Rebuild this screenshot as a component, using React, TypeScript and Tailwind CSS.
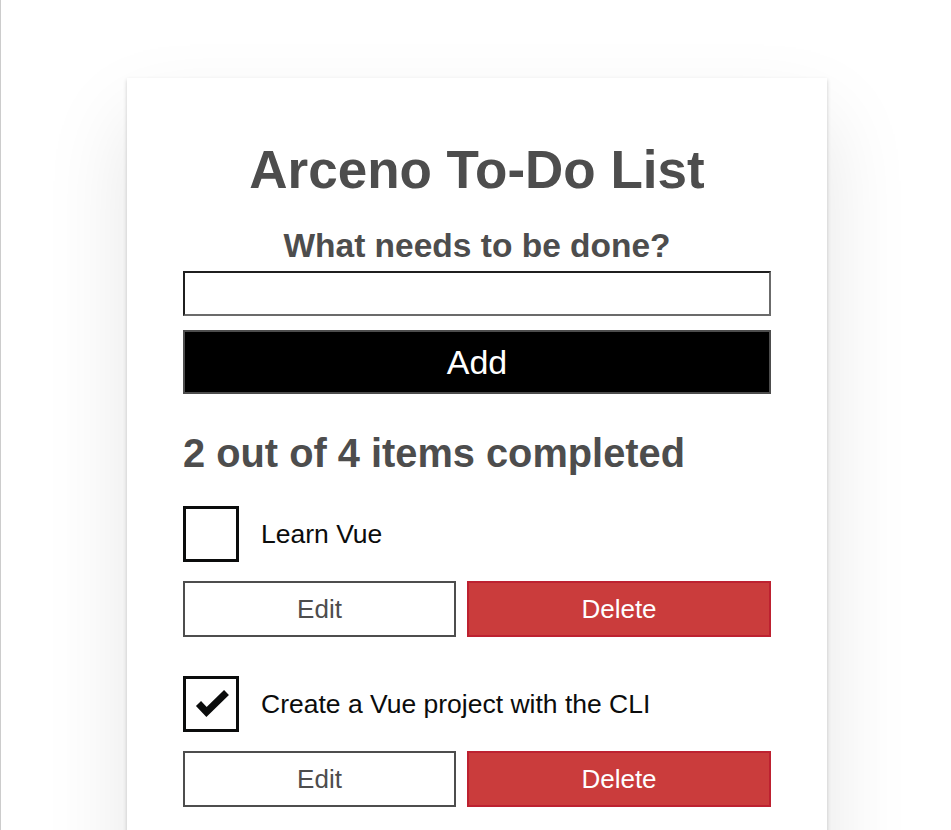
import { useState } from "react";

interface Todo {
  id: number;
  label: string;
  done: boolean;
}

const startTodos: Todo[] = [
  { id: 1, label: "Learn Vue", done: false },
  { id: 2, label: "Create a Vue project with the CLI", done: true },
  { id: 3, label: "Have fun", done: true },
  { id: 4, label: "Create a to-do list", done: false },
];

function TodoItem({ todo, onToggle }: { todo: Todo; onToggle: () => void }) {
  return (
    <li className="mt-[39px] first:mt-0">
      <div className="flex items-center">
        <button
          onClick={onToggle}
          aria-label={todo.label}
          className="relative h-[56px] w-[56px] shrink-0 border-[3px] border-[#0b0c0c] bg-white"
        >
          {todo.done && (
            <svg
              className="absolute left-[-3px] top-[-3px]"
              width="56"
              height="56"
              viewBox="0 0 56 56"
              fill="none"
            >
              <path d="M15.5 27.5 L23.5 36 L43.5 16.5" stroke="#0b0c0c" strokeWidth="7" />
            </svg>
          )}
        </button>
        <span className="ml-[22px] text-[26.5px] leading-[32px] text-[#0b0c0c]">
          {todo.label}
        </span>
      </div>
      <div className="mt-[19px] flex gap-[11px]">
        <button className="h-[56px] w-[273px] border-2 border-[#4d4d4d] bg-white text-[26px] text-[#4d4d4d]">
          Edit
        </button>
        <button className="h-[56px] flex-1 border-2 border-[#bd2130] bg-[#ca3c3c] text-[26px] text-white">
          Delete
        </button>
      </div>
    </li>
  );
}

export default function App() {
  const [todos, setTodos] = useState(startTodos);
  const [texto, setTexto] = useState("");

  const feitos = todos.filter((t) => t.done).length;

  const adicionar = () => {
    if (!texto.trim()) return;
    setTodos([...todos, { id: Date.now(), label: texto.trim(), done: false }]);
    setTexto("");
  };

  return (
    <div className="min-h-[830px] overflow-hidden border-l border-[#cccccc] bg-white pl-[2px] font-['Liberation_Sans',Arial,sans-serif]">
      <div className="flex justify-center pt-[78px]">
        <div className="w-[700px] bg-white px-[56px] pt-[59px] pb-[56px] shadow-[0_2px_4px_0_rgba(0,0,0,0.2),0_40px_80px_0_rgba(0,0,0,0.1)]">
          <h1 className="text-center text-[53px] font-bold leading-[66px] text-[#4d4d4d]">
            Arceno To-Do List
          </h1>

          <form
            onSubmit={(e) => {
              e.preventDefault();
              adicionar();
            }}
          >
            <label
              htmlFor="novo-todo"
              className="mt-[22px] block text-center text-[33.5px] font-bold leading-[42px] text-[#4d4d4d]"
            >
              What needs to be done?
            </label>
            <input
              id="novo-todo"
              value={texto}
              onChange={(e) => setTexto(e.target.value)}
              className="mt-[4px] block h-[45px] w-full border-2 border-t-[#1f1f1f] border-l-[#1f1f1f] border-b-[#6b6b6b] border-r-[#6b6b6b] bg-white px-2 text-[26px] outline-none"
            />
            <button
              type="submit"
              className="mt-[14px] block h-[64px] w-full border-2 border-[#4d4d4d] bg-black text-[34px] text-white"
            >
              Add
            </button>
          </form>

          <h2 className="mt-[34px] text-[39.8px] font-bold leading-[50px] text-[#4d4d4d]">
            {feitos} out of {todos.length} items completed
          </h2>

          <ul className="mt-[28px]">
            {todos.map((t) => (
              <TodoItem
                key={t.id}
                todo={t}
                onToggle={() =>
                  setTodos(todos.map((x) => (x.id === t.id ? { ...x, done: !x.done } : x)))
                }
              />
            ))}
          </ul>
        </div>
      </div>
    </div>
  );
}
